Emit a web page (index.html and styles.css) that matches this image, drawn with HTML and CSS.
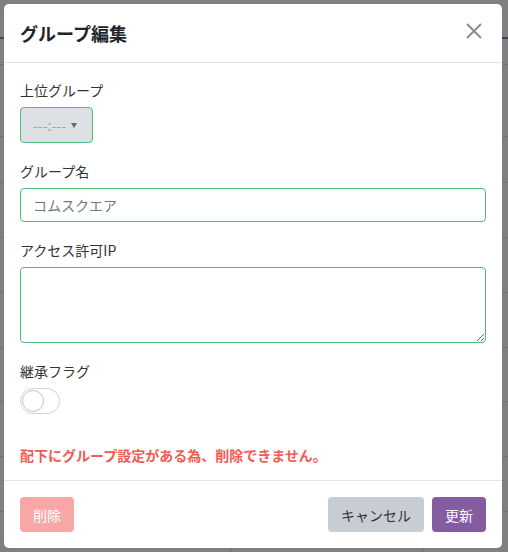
FILE: index.html
```html
<!DOCTYPE html>
<html lang="ja">
<head>
<meta charset="utf-8">
<title>グループ編集</title>
<link rel="stylesheet" href="styles.css">
</head>
<body>
<div class="backdrop">
  <div class="bg-head"></div>
  <div class="bg-row h25"><div></div><div></div><div></div></div>
  <div class="bg-row h71"><div></div><div></div><div></div></div>
  <div class="bg-row h45"><div></div><div></div><div></div></div>
  <div class="bg-row h55"><div></div><div></div><div></div></div>
  <div class="bg-row h55"><div></div><div></div><div></div></div>
  <div class="bg-row h55"><div></div><div></div><div></div></div>
  <div class="bg-row h54"><div></div><div></div><div></div></div>
  <div class="bg-row h55"><div></div><div></div><div></div></div>
  <div class="bg-row h55"><div></div><div></div><div></div></div>
  <div class="bg-row h55"><div></div><div></div><div></div></div>
</div>

<div class="modal">
  <div class="modal-header">
    <h5 class="modal-title">グループ編集</h5>
    <button class="close" type="button" aria-label="Close">
      <svg width="16" height="16" viewBox="0 0 16 16"><path d="M1 1 L15 15 M15 1 L1 15" stroke="#8a8a8a" stroke-width="1.8" fill="none"/></svg>
    </button>
  </div>
  <div class="modal-body">
    <div class="group">
      <label class="label">上位グループ</label>
      <button class="select-btn" type="button">---:---<span class="caret"></span></button>
    </div>
    <div class="group">
      <label class="label">グループ名</label>
      <input class="input" type="text" value="コムスクエア">
    </div>
    <div class="group">
      <label class="label">アクセス許可IP</label>
      <textarea class="input textarea"></textarea>
    </div>
    <div class="group">
      <label class="label">継承フラグ</label>
      <div class="toggle"><div class="knob"></div></div>
    </div>
    <p class="error">配下にグループ設定がある為、削除できません。</p>
  </div>
  <div class="modal-footer">
    <button class="btn btn-delete" type="button">削除</button>
    <div class="btn-group">
      <button class="btn btn-cancel" type="button">キャンセル</button>
      <button class="btn btn-update" type="button">更新</button>
    </div>
  </div>
</div>
</body>
</html>
```

FILE: styles.css
```css
html, body {
  margin: 0;
  padding: 0;
}
body {
  width: 508px;
  height: 552px;
  overflow: hidden;
  position: relative;
  background: #808080;
  font-family: "Noto Sans CJK JP", "Noto Sans", sans-serif;
}

/* dimmed page behind the dialog */
.backdrop {
  width: 508px;
}
.bg-head {
  height: 37px;
  border-bottom: 2px solid #4e3d5e;
}
.bg-row {
  display: grid;
  grid-template-columns: 231px 192px 1fr;
  border-bottom: 1px solid #727272;
}
.bg-row > div + div {
  border-left: 1px solid #727272;
}
.h25 { height: 25px; }
.h71 { height: 71px; }
.h45 { height: 45px; }
.h54 { height: 53px; }
.h55 { height: 54px; }

/* dialog */
.modal {
  position: absolute;
  left: 4px;
  top: 4px;
  width: 498px;
  background: #fff;
  border-radius: 5px;
}
.modal-header {
  display: flex;
  align-items: center;
  justify-content: space-between;
  padding: 16px 20px 16px 16px;
  border-bottom: 1px solid #e4e4e4;
}
.modal-title {
  margin: 0;
  font-size: 18px;
  line-height: 26px;
  font-weight: 700;
  color: #212529;
}
.close {
  background: none;
  border: 0;
  padding: 0;
  margin-bottom: 4px;
  cursor: pointer;
}
.close svg {
  display: block;
}

.modal-body {
  padding: 17px 16px 15px;
}
.group {
  margin-bottom: 18px;
}
.label {
  display: block;
  font-size: 14px;
  line-height: 20px;
  color: #333;
  margin-bottom: 7px;
}
.select-btn {
  display: inline-flex;
  align-items: center;
  box-sizing: border-box;
  width: 73px;
  height: 36px;
  padding: 0 12px;
  background: #dde0e4;
  border: 1px solid #4cbf73;
  border-radius: 4px;
  color: #a3a3a3;
  font-family: inherit;
  font-size: 14px;
}
.caret {
  display: inline-block;
  margin-left: 5px;
  border-top: 5px solid #666;
  border-left: 3.5px solid transparent;
  border-right: 3.5px solid transparent;
}
.input {
  display: block;
  box-sizing: border-box;
  width: 100%;
  height: 34px;
  padding: 0 12px;
  border: 1px solid #4cbf73;
  border-radius: 4px;
  font-family: inherit;
  font-size: 14px;
  color: #777;
  background: #fff;
  outline: none;
}
.textarea {
  height: 76px;
  padding: 6px 12px;
  resize: vertical;
}
.toggle {
  box-sizing: border-box;
  width: 40px;
  height: 26px;
  padding: 1px;
  border: 1px solid #cfd3d8;
  border-radius: 13px;
}
.knob {
  box-sizing: border-box;
  width: 22px;
  height: 22px;
  border: 1px solid #c3c7cc;
  border-radius: 50%;
  background: #fff;
}
.error {
  margin: 31px 0 0;
  font-size: 14px;
  line-height: 20px;
  font-weight: 700;
  color: #f25a52;
}

.modal-footer {
  display: flex;
  justify-content: space-between;
  align-items: center;
  padding: 16px;
  border-top: 1px solid #e4e4e4;
}
.btn-group {
  display: flex;
  gap: 8px;
}
.btn {
  height: 35px;
  padding: 0 13px;
  border: 0;
  border-radius: 4px;
  font-family: inherit;
  font-size: 14px;
}
.btn-delete {
  background: #f8a7a7;
  color: #fff;
}
.btn-cancel {
  background: #c8cdd3;
  color: #333;
}
.btn-update {
  background: #845ca0;
  color: #fff;
}
```
